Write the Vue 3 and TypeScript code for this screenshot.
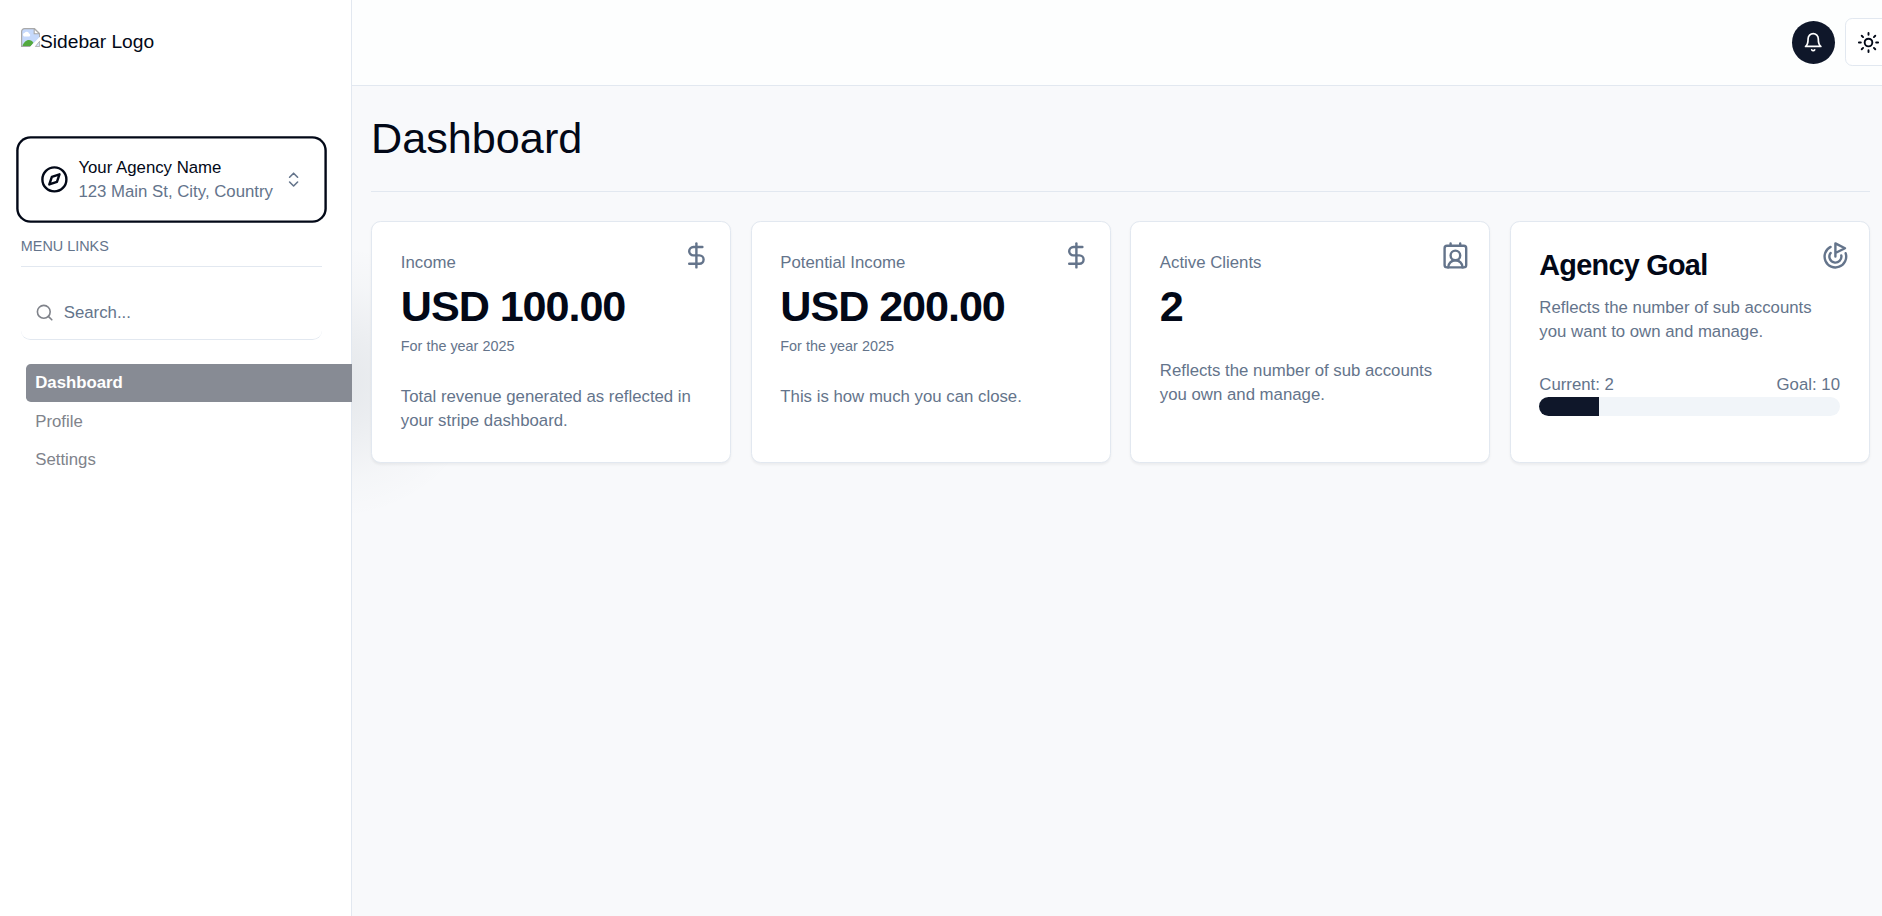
<script setup lang="ts">
interface StatCard {
  title: string
  value: string
  note?: string
  text: string
  icon: 'dollar' | 'contact'
}

const cards: StatCard[] = [
  { title: 'Income', value: 'USD 100.00', note: 'For the year 2025', text: 'Total revenue generated as reflected in your stripe dashboard.', icon: 'dollar' },
  { title: 'Potential Income', value: 'USD 200.00', note: 'For the year 2025', text: 'This is how much you can close.', icon: 'dollar' },
  { title: 'Active Clients', value: '2', text: 'Reflects the number of sub accounts you own and manage.', icon: 'contact' },
]

const links: string[] = ['Dashboard', 'Profile', 'Settings']
const activeLink = 'Dashboard'
const current = 2
const goal = 10
</script>

<template>
  <div class="page">
    <aside class="sidebar">
      <div class="logo">
        <svg class="broken" viewBox="0 0 16 16">
          <path d="M3 .5h8.2L15.5 4.8V8L8.5 15.5H.5V3A2.5 2.5 0 0 1 3 .5z" fill="#c6d9fb" />
          <path d="M2.500 7a1.600 1.600 0 0 1 .6-3 2 2 0 0 1 3.600.6A1.300 1.300 0 0 1 7 7z" fill="#fff" />
          <path d="M1 15.500c1-3.400 3.300-5.400 5.600-5.400 1.600 0 2.800.7 3.700 2.100L8 15.500z" fill="#53a93f" />
          <path d="M8.500 15.500H.5V3A2.500 2.500 0 0 1 3 .5h8.200l4.300 4.300V8" fill="none" stroke="#a9a9a9" />
          <path d="M11 .5v4.300h4.500z" fill="#fff" stroke="#a9a9a9" stroke-width=".9" />
          <path d="M12 15.500h3.500V11z" fill="#d5e3fc" stroke="#a9a9a9" stroke-width=".7" />
          <path d="M8 16.500L16.500 8" stroke="#fff" stroke-width="1.800" />
        </svg>
        <span>Sidebar Logo</span>
      </div>

      <button class="switcher">
        <svg class="icon compass" viewBox="0 0 24 24">
          <circle cx="12" cy="12" r="10" />
          <polygon points="16.24 7.76 14.12 14.12 7.76 16.24 9.88 9.88 16.24 7.76" />
        </svg>
        <span class="agency">
          <span>Your Agency Name</span>
          <span class="muted">123 Main St, City, Country</span>
        </span>
        <svg class="icon small muted" viewBox="0 0 24 24">
          <path d="m7 15 5 5 5-5" />
          <path d="m7 9 5-5 5 5" />
        </svg>
      </button>

      <p class="menu-title">MENU LINKS</p>
      <div class="rule"></div>

      <div class="search">
        <svg class="icon small faded" viewBox="0 0 24 24">
          <circle cx="11" cy="11" r="8" />
          <path d="m21 21-4.300-4.300" />
        </svg>
        <span>Search...</span>
      </div>

      <nav class="links">
        <a v-for="link in links" :key="link" class="link" :class="{ active: link === activeLink }">{{ link }}</a>
      </nav>
    </aside>

    <div class="content">
      <header class="topbar">
        <span class="bell">
          <svg class="icon" viewBox="0 0 24 24">
            <path d="M6 8a6 6 0 0 1 12 0c0 7 3 9 3 9H3s3-2 3-9" />
            <path d="M10.300 21a1.940 1.940 0 0 0 3.400 0" />
          </svg>
        </span>
        <button class="theme">
          <svg class="icon" viewBox="0 0 24 24">
            <circle cx="12" cy="12" r="4" />
            <path d="M12 2v2M12 20v2M4.930 4.930l1.410 1.410M17.660 17.660l1.410 1.410M2 12h2M20 12h2M6.340 17.660l-1.410 1.410M19.070 4.930l-1.410 1.410" />
          </svg>
        </button>
      </header>

      <main class="main">
        <h1>Dashboard</h1>
        <div class="divider"></div>
        <section class="cards">
          <article v-for="card in cards" :key="card.title" class="card">
            <svg v-if="card.icon === 'dollar'" class="icon corner" viewBox="0 0 24 24">
              <path d="M12 2v20" />
              <path d="M17 5H9.500a3.500 3.500 0 0 0 0 7h5a3.500 3.500 0 0 1 0 7H6" />
            </svg>
            <svg v-else class="icon corner" viewBox="0 0 24 24">
              <path d="M16 2v2M8 2v2" />
              <path d="M18 22a6 6 0 0 0-12 0" />
              <circle cx="12" cy="12" r="4" />
              <rect x="3" y="4" width="18" height="18" rx="2" />
            </svg>
            <p>{{ card.title }}</p>
            <h2 class="value">{{ card.value }}</h2>
            <small v-if="card.note">{{ card.note }}</small>
            <p class="text">{{ card.text }}</p>
          </article>

          <article class="card goal">
            <svg class="icon corner" viewBox="0 0 24 24">
              <path d="M12 13V2l8 4-8 4" />
              <path d="M20.561 10.222a9 9 0 1 1-12.550-5.290" />
              <path d="M8.002 9.997a5 5 0 1 0 8.900 2.020" />
            </svg>
            <h3>Agency Goal</h3>
            <p class="goal-text">Reflects the number of sub accounts you want to own and manage.</p>
            <div class="counts">
              <span>Current: {{ current }}</span>
              <span>Goal: {{ goal }}</span>
            </div>
            <div class="track">
              <div class="fill" :style="{ width: (current / goal) * 100 + '%' }"></div>
            </div>
          </article>
        </section>
      </main>
    </div>
  </div>
</template>

<style>
body {
  margin: 0;
  overflow: hidden;
}
</style>

<style scoped>
.page {
  display: flex;
  width: 1882px;
  height: 916px;
  overflow: hidden;
  background: #f8f9fb;
  color: #020817;
  font-family: "Liberation Sans", Arial, sans-serif;
  font-size: 16.8px;
  line-height: 24px;
}
p, h1, h2, h3 { margin: 0; }
button {
  font: inherit;
  color: inherit;
  background: #fff;
}
.icon {
  display: block;
  flex: none;
  fill: none;
  stroke: currentColor;
  stroke-width: 2;
  stroke-linecap: round;
  stroke-linejoin: round;
}
.muted { color: #64748b; }
.small { width: 19.2px; height: 19.2px; }

.sidebar {
  box-sizing: border-box;
  flex: none;
  width: 352px;
  height: 916px;
  padding: 28px 0 0 20.8px;
  border-right: 1px solid #e2e8f0;
  background: #fff;
}
.logo {
  display: flex;
  height: 113px;
  font-size: 19.2px;
  line-height: 27px;
}
.broken { width: 19.2px; height: 19.2px; }
.switcher {
  display: flex;
  align-items: center;
  box-sizing: border-box;
  width: 301px;
  height: 77px;
  padding: 0 18.6px 0 19.2px;
  border: 0;
  border-radius: 9.6px;
  box-shadow: 0 0 0 2.4px #fff, 0 0 0 4.8px #020817;
  text-align: left;
}
.compass { width: 28.8px; height: 28.8px; margin-right: 9.6px; }
.agency {
  display: flex;
  flex-direction: column;
  flex: 1;
  white-space: nowrap;
}
.menu-title {
  padding-top: 19px;
  color: #64748b;
  font-size: 14.4px;
  line-height: 19px;
}
.rule {
  width: 301px;
  height: 1px;
  margin-top: 10px;
  background: #e2e8f0;
}
.search {
  display: flex;
  align-items: center;
  gap: 9.6px;
  box-sizing: border-box;
  width: 301px;
  height: 55px;
  margin-top: 18px;
  padding: 2px 14.2px 0;
  border-bottom: 1px solid #e2e8f0;
  border-radius: 9.6px;
  color: #64748b;
}
.faded { color: #020817; opacity: .5; }
.links {
  margin: 24px -1px 0 5px;
}
.link {
  display: block;
  box-sizing: border-box;
  height: 38.4px;
  padding: 7.2px 9.4px;
  color: #80838b;
}
.active {
  border-radius: 4.8px 0 0 4.8px;
  background: #878b94;
  color: #fff;
  font-weight: 700;
}

.content {
  flex: 1;
  min-width: 0;
  background: radial-gradient(ellipse 155px 138px at -22px 382px, rgba(15, 38, 58, .085), rgba(15, 38, 58, .055) 35%, rgba(15, 38, 58, .014) 72%, transparent);
}
.topbar {
  display: flex;
  align-items: center;
  gap: 9.6px;
  box-sizing: border-box;
  height: 86px;
  padding-left: 1440px;
  border-bottom: 1px solid #e2e8f0;
  background: #fdfefe;
}
.bell {
  display: flex;
  align-items: center;
  justify-content: center;
  flex: none;
  width: 43.2px;
  height: 43.2px;
  border-radius: 50%;
  background: #0f172a;
  color: #fff;
}
.bell .icon { width: 20.4px; height: 20.4px; }
.theme {
  display: flex;
  align-items: center;
  justify-content: center;
  flex: none;
  box-sizing: border-box;
  width: 48px;
  height: 48px;
  margin-bottom: 1px;
  padding: 0;
  border: 1px solid #e2e8f0;
  border-radius: 7.2px;
}
.theme .icon { width: 23px; height: 23px; }

.main { padding: 28px 12.2px 0 19px; }
h1 {
  font-size: 43.2px;
  font-weight: 400;
  line-height: 48px;
}
.divider {
  height: 1px;
  margin: 29px 0;
  background: #e2e8f0;
}
.cards {
  display: grid;
  grid-template-columns: repeat(4, 1fr);
  gap: 19.2px;
}
.card {
  position: relative;
  box-sizing: border-box;
  height: 242px;
  padding: 28.8px;
  border: 1px solid #e2e8f0;
  border-radius: 9.6px;
  background: #fff;
  box-shadow: 0 1.2px 2.4px rgba(0, 0, 0, .05);
  color: #64748b;
}
.corner {
  position: absolute;
  top: 19.2px;
  right: 19.2px;
  width: 28.8px;
  height: 28.8px;
}
.value {
  margin: 10px 0 12px;
  height: 40px;
  color: #020817;
  font-size: 43.2px;
  line-height: 43px;
  letter-spacing: -.025em;
}
small {
  display: block;
  height: 19px;
  font-size: 14.4px;
  line-height: 19px;
}
.value + .text { margin-top: 33.8px; }
small + .text { margin-top: 28.8px; }
h3 {
  color: #020817;
  font-size: 28.8px;
  line-height: 28.8px;
  letter-spacing: -.025em;
}
.goal-text { margin-top: 16px; }
.counts {
  display: flex;
  justify-content: space-between;
  margin-top: 29.4px;
}
.track {
  height: 19px;
  overflow: hidden;
  border-radius: 10px;
  background: #f1f5f9;
}
.fill {
  height: 100%;
  background: #0f172a;
}
</style>
